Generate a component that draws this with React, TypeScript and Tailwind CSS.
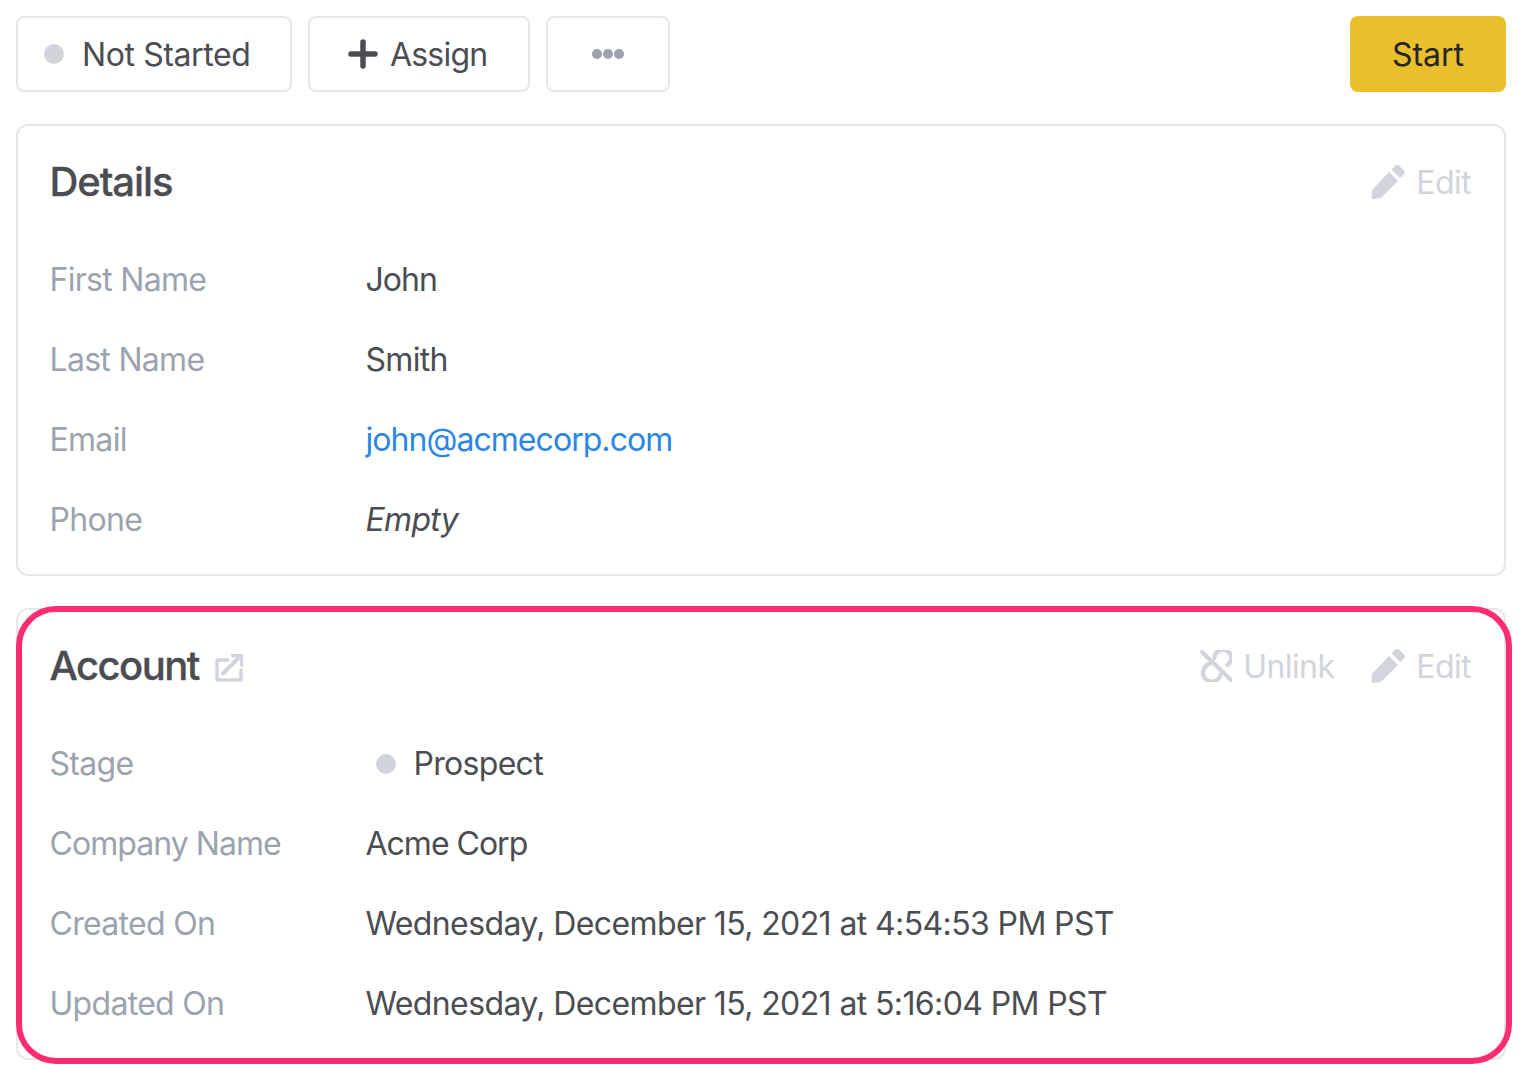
import { ReactNode } from "react";

const PencilIcon = () => (
  <svg viewBox="6 5 34 34" className="h-[34px] w-[34px] text-[#d1d5db]" fill="currentColor" aria-hidden>
    <path d="M7 30 L24 12 L33 21 L16 38 L8 39 Q6.5 39 6.5 37.5 Z" />
    <path d="M26.5 9.5 L30 5.5 Q32 4 34 5.5 L39 10.5 Q40.5 12.5 39 14.5 L35 18 Z" />
  </svg>
);

const UnlinkIcon = () => (
  <svg viewBox="6 6 32 32" className="h-8 w-8 text-[#d1d5db]" fill="none" stroke="currentColor" strokeWidth="4.2" strokeLinecap="round" aria-hidden>
    <path d="M8 8 L37 36" />
    <path d="M20.5 14 C20 9 24 6 29 6 C34 6 37.5 10 37.5 14.5 C37.5 17 36 19 33.5 21" />
    <path d="M16.5 19 C12 21 9 24 9 29 C9 34 13 37.5 18 37.5 C22 37.5 26 35 26.5 30.5" />
  </svg>
);

const ExternalIcon = () => (
  <svg viewBox="5 5 28 28" className="mt-1 h-7 w-7 text-[#d1d5db]" fill="none" stroke="currentColor" strokeWidth="3.4" aria-hidden>
    <path d="M18 11 H7 V31 H31 V21" strokeLinejoin="round" strokeLinecap="round" />
    <path d="M13 24.5 L29 8.5" strokeWidth="4" strokeLinecap="round" />
    <path d="M23 6.5 H32 V16" strokeWidth="3.8" strokeLinejoin="round" strokeLinecap="round" />
  </svg>
);

const Dot = () => <span className="h-5 w-5 shrink-0 rounded-full bg-[#d1d5db]" />;

const Action = ({ icon, label }: { icon: ReactNode; label: string }) => (
  <div className="flex items-center gap-[11px] text-[32px] leading-10 tracking-[-0.6px] text-[#d1d5db]">
    {icon}
    <span className="pt-[2px]">{label}</span>
  </div>
);

const Row = ({ label, children }: { label: ReactNode; children: ReactNode }) => (
  <div className="flex h-20 items-center text-[32px] leading-10 tracking-[-0.7px]">
    <div className="w-[316px] shrink-0 text-[#9ca3af]">{label}</div>
    <div className="text-[#4b4d52]">{children}</div>
  </div>
);

const Card = ({ title, titleIcon, actions, children }: { title: ReactNode; titleIcon?: ReactNode; actions: ReactNode; children: ReactNode }) => (
  <section className="h-[452px] rounded-xl border-2 border-[#e5e7eb] bg-white pl-[31.5px] pr-[33px] pt-8">
    <div className="flex h-12 items-center justify-between">
      <div className="flex items-center gap-4">
        <h2 className="text-[40px] font-medium leading-[48px] text-[#4b4d52] [-webkit-text-stroke:0.3px_#4b4d52]">{title}</h2>
        {titleIcon}
      </div>
      <div className="flex items-center gap-[37px]">{actions}</div>
    </div>
    <div className="mt-[34px]">{children}</div>
  </section>
);

export default function App() {
  return (
    <div className="relative flex h-[1084px] w-[1524px] flex-col gap-8 overflow-hidden bg-white pb-6 pl-4 pr-[18px] pt-4 font-['Inter',sans-serif]">
      <div className="flex h-[76px] items-stretch justify-between">
        <div className="flex gap-4">
          <button type="button" className="flex w-[276px] items-center gap-[18px] rounded-lg border-2 border-[#e5e7eb] pl-[26px] text-[32px] tracking-[-0.4px] text-[#4b4d52]">
            <Dot />
            <span className="pt-[2px]">Not Started</span>
          </button>
          <button type="button" className="flex w-[222px] items-center gap-3 rounded-lg border-2 border-[#e5e7eb] pl-[38px] text-[32px] tracking-[-0.8px] text-[#4b4d52]">
            <svg viewBox="0 0 30 30" className="h-[30px] w-[30px]" fill="none" stroke="currentColor" strokeWidth="5.5" strokeLinecap="round" aria-hidden>
              <path d="M15 3 V27 M3 15 H27" />
            </svg>
            <span className="pt-[2px]">Assign</span>
          </button>
          <button type="button" className="flex w-[124px] items-center justify-center gap-[1px] rounded-lg border-2 border-[#e5e7eb]">
            <span className="h-[10px] w-[10px] rounded-full bg-[#9ca3af]" />
            <span className="h-[10px] w-[10px] rounded-full bg-[#9ca3af]" />
            <span className="h-[10px] w-[10px] rounded-full bg-[#9ca3af]" />
          </button>
        </div>
        <button type="button" className="w-[156px] rounded-lg bg-[#e9bf2b] pt-[2px] text-[32px] text-[#22262b]">Start</button>
      </div>

      <Card title={<span className="tracking-[-1.1px]">Details</span>} actions={<Action icon={<PencilIcon />} label="Edit" />}>
        <Row label="First Name"><span className="tracking-[-1px]">John</span></Row>
        <Row label="Last Name">Smith</Row>
        <Row label="Email"><span className="tracking-[-0.95px] text-[#2b87e3]">john@acmecorp.com</span></Row>
        <Row label="Phone"><span className="italic">Empty</span></Row>
      </Card>

      <Card
        title={<span className="tracking-[-1.55px]">Account</span>}
        titleIcon={<ExternalIcon />}
        actions={
          <>
            <Action icon={<UnlinkIcon />} label="Unlink" />
            <Action icon={<PencilIcon />} label="Edit" />
          </>
        }
      >
        <Row label="Stage">
          <span className="flex items-center gap-[18px] pl-[10px]">
            <Dot />
            Prospect
          </span>
        </Row>
        <Row label={<span className="tracking-[-0.95px]">Company Name</span>}><span className="tracking-[-1px]">Acme Corp</span></Row>
        <Row label="Created On"><span className="tracking-[-0.61px]">Wednesday, December 15, 2021 at 4:54:53 PM PST</span></Row>
        <Row label="Updated On"><span className="tracking-[-0.61px]">Wednesday, December 15, 2021 at 5:16:04 PM PST</span></Row>
      </Card>

      <div className="pointer-events-none absolute left-4 top-[606px] h-[458px] w-[1496px] rounded-[40px] border-[6px] border-[#ff2d6f]" />
    </div>
  );
}
